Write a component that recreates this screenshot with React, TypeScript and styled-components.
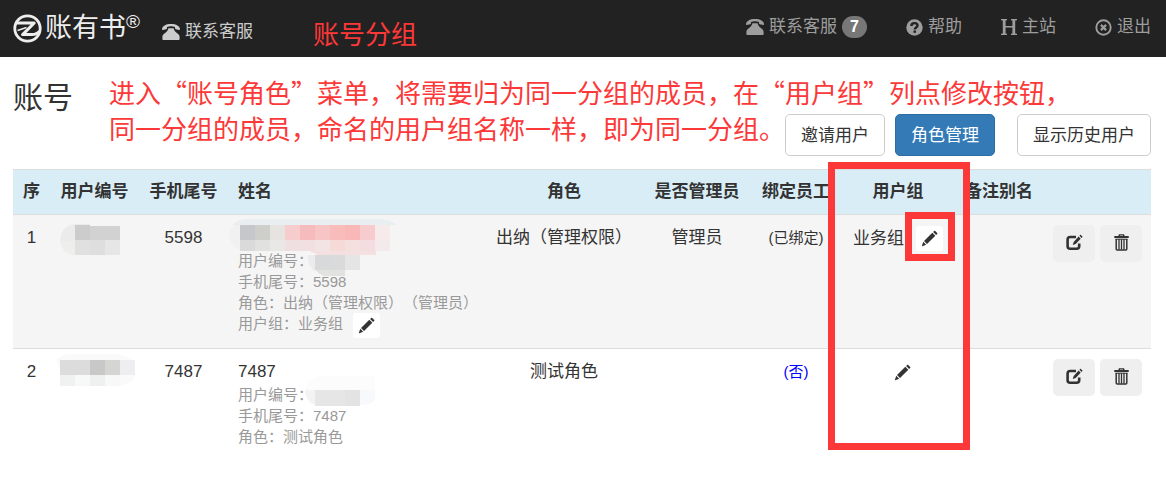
import React from "react";
import styled, { createGlobalStyle, css } from "styled-components";

const RED = "#fc3838";

const GlobalStyle = createGlobalStyle`
  *, *::before, *::after { box-sizing: border-box; }
  body {
    margin: 0;
    background: #fff;
    color: #333;
    font-family: "Liberation Sans", "Noto Sans CJK SC", sans-serif;
    font-size: 17px;
    line-height: 24px;
  }
  button { font-family: inherit; font-size: inherit; cursor: pointer; }
`;

const Page = styled.div`
  position: relative;
`;

const Header = styled.header`
  display: flex;
  align-items: flex-start;
  height: 57px;
  padding: 0 15px 0 13px;
  background: #222;
`;

const Brand = styled.a`
  display: flex;
  align-items: center;
  height: 57px;
  color: #eee;
  text-decoration: none;
`;

const BrandName = styled.span`
  margin-left: 3px;
  font-size: 27px;
  line-height: 57px;
`;

const Registered = styled.sup`
  align-self: flex-start;
  margin-top: 12px;
  font-size: 19px;
  line-height: 19px;
  vertical-align: baseline;
`;

const NavLink = styled.a<{ $bright?: boolean }>`
  display: flex;
  align-items: center;
  gap: 5px;
  height: 54px;
  color: ${(p) => (p.$bright ? "#ccc" : "#9d9d9d")};
  text-decoration: none;
  white-space: nowrap;
`;

const Contact = styled.div`
  padding: 5px 0 0 22px;
`;

const Note = styled.p`
  margin: 0;
  color: ${RED};
  font-family: "Noto Sans CJK SC", sans-serif;
  font-size: 26px;
  line-height: 36px;
  white-space: nowrap;
`;

const HeaderNote = styled(Note)`
  padding: 15px 0 0 60px;
`;

const PageNote = styled(Note)`
  position: absolute;
  top: 74px;
  left: 109px;
  pointer-events: none;
`;

const Nav = styled.nav`
  display: flex;
  gap: 39px;
  margin-left: auto;
`;

const Badge = styled.span`
  min-width: 25px;
  border-radius: 11px;
  background: #777;
  color: #fff;
  font-size: 16px;
  font-weight: 700;
  line-height: 22px;
  text-align: center;
`;

const Main = styled.main`
  padding: 0 15px 0 13px;
`;

const TitleBar = styled.div`
  display: flex;
  align-items: flex-end;
  height: 99px;
  margin-bottom: 13px;
`;

const Title = styled.h1`
  flex: 1;
  margin: 0;
  align-self: flex-start;
  padding-top: 23px;
  font-size: 30px;
  font-weight: 400;
  line-height: 36px;
`;

const Actions = styled.div`
  display: flex;
  gap: 10px;
`;

const Button = styled.button<{ $primary?: boolean; $apart?: boolean }>`
  height: 42px;
  padding: 2px 15px 0;
  border: 1px solid #ccc;
  border-radius: 5px;
  background: #fff;
  color: #333;
  line-height: 24px;
  ${(p) => p.$apart && css`margin-left: 12px;`}
  ${(p) =>
    p.$primary &&
    css`
      border-color: #2e6da4;
      background: #337ab7;
      color: #fff;
    `}
`;

const Table = styled.table`
  width: 100%;
  border-collapse: collapse;
  table-layout: fixed;
`;

const Col = styled.col<{ $w?: number }>`
  width: ${(p) => (p.$w ? `${p.$w}px` : "auto")};
`;

const Th = styled.th<{ $left?: boolean }>`
  position: relative;
  padding: 10px;
  border-top: 1px solid #ddd;
  background: #d9edf7;
  font-weight: 700;
  text-align: ${(p) => (p.$left ? "left" : "center")};
  white-space: nowrap;
`;

const Row = styled.tr<{ $striped?: boolean }>`
  background: ${(p) => (p.$striped ? "#f5f5f5" : "#fff")};
`;

const Td = styled.td<{ $left?: boolean }>`
  position: relative;
  padding: 10px;
  border-top: 1px solid #ddd;
  line-height: 26px;
  text-align: ${(p) => (p.$left ? "left" : "center")};
  vertical-align: top;
  white-space: nowrap;
`;

const Primary = styled.div`
  height: 25px;
`;

const Detail = styled.div`
  color: #999;
  font-size: 15px;
  line-height: 21px;
  text-spacing-trim: space-all;
`;

const GroupLine = styled.div`
  display: flex;
  align-items: center;
  justify-content: center;
  gap: 4px;
  height: 27px;
`;

const DetailGroupLine = styled(GroupLine)`
  align-items: flex-start;
  justify-content: flex-start;
  gap: 2px;
  height: 25px;
`;

const Bound = styled.span`
  font-size: 15px;
`;

const BoundLink = styled.a`
  color: #00f;
  font-size: 15px;
  text-decoration: none;
`;

const MiniButton = styled.button`
  position: relative;
  display: flex;
  align-items: center;
  justify-content: center;
  width: 27px;
  height: 25px;
  margin: 0 0 0 8px;
  padding: 0;
  border: 0;
  border-radius: 3px;
  background: #fff;
  color: #333;
`;

const ButtonPair = styled.div`
  display: flex;
  gap: 5px;
`;

const SquareButton = styled.button`
  display: flex;
  flex: none;
  align-items: center;
  justify-content: center;
  width: 42px;
  height: 37px;
  padding: 0 0 3px;
  border: 0;
  border-radius: 5px;
  background: #efefef;
  color: #333;
`;

const ColumnMark = styled.span`
  position: absolute;
  z-index: 2;
  top: -8px;
  left: -13px;
  right: -15px;
  height: 288px;
  border: 7px solid ${RED};
  pointer-events: none;
`;

const ButtonMark = styled.span`
  position: absolute;
  z-index: 2;
  inset: -14px -12px -10px -11px;
  border: 7px solid ${RED};
  pointer-events: none;
`;

const MaskSvg = styled.svg`
  position: absolute;
  top: 0;
  left: 0;
  pointer-events: none;
`;

/* ---------- icons ---------- */

const PhoneIcon = () => (
  <svg width="18" height="16" viewBox="0 0 18 16" fill="currentColor" aria-hidden="true">
    <path d="M0 5.200C.2 3.400 1 2.200 2.600 1.400 4.200.4 6.400 0 9 0s4.800.4 6.400 1.400C17 2.200 17.800 3.400 18 5.200c0 .6-.3.800-.8.700l-3.400-.7c-.5-.1-.8-.4-.8-.9V2.900C11.800 2.500 10.400 2.300 9 2.300s-2.800.2-4 .6v1.400c0 .5-.3.800-.8.900l-3.400.7C.3 6 0 5.800 0 5.200z" />
    <path d="M6.400 4.300h5.200c.3 1.900 1.400 3.400 3.300 4.800 2 1.400 2.700 2.400 2.700 3.900v2.200c0 .5-.3.800-.8.800H1.200c-.5 0-.8-.3-.8-.8V13c0-1.500.7-2.500 2.700-3.900 1.900-1.400 3-2.900 3.300-4.800z" />
  </svg>
);

const HelpIcon = () => (
  <svg width="17" height="17" viewBox="0 0 17 17" fill="none" aria-hidden="true">
    <circle cx="8.500" cy="8.500" r="8.200" fill="currentColor" />
    <path d="M5.400 6.900C5.400 4.900 6.700 4.100 8.500 4.100s3 .9 3 2.400c0 2-2.700 1.900-2.700 4" stroke="#222" strokeWidth="2.400" />
    <path d="M7.500 11.500h2.500v2.300H7.500z" fill="#222" />
  </svg>
);

const HomeIcon = () => (
  <svg width="16" height="16" viewBox="0 0 16 16" fill="currentColor" aria-hidden="true">
    <path d="M0 0h6v1.200L4.600 1.500V7h6.800V1.500L10 1.200V0h6v1.200l-1.800.4v12.800l1.800.4V16h-6v-1.200l1.400-.3V8.600H4.600v5.900l1.400.3V16H0v-1.200l1.800-.4V1.600L0 1.200z" />
  </svg>
);

const ExitIcon = () => (
  <svg width="17" height="17" viewBox="0 0 17 17" fill="none" stroke="currentColor" aria-hidden="true">
    <circle cx="8.500" cy="8.500" r="7.200" strokeWidth="1.900" />
    <path d="M5.900 5.900l5.200 5.200M11.100 5.900l-5.200 5.200" strokeWidth="2.200" />
  </svg>
);

const PencilIcon = () => (
  <svg width="17" height="17" viewBox="0 0 17 17" fill="currentColor" aria-hidden="true">
    <path d="M13.200.9c.3-.3.700-.3 1 0l2 2c.3.300.3.700 0 1l-1.100 1.100-3-3zM11.300 2.800l3 3-8.300 8.200-3-3zM2.200 11.800l3 3-3.900 1.500c-.3.100-.5-.1-.4-.4z" />
  </svg>
);

const EditIcon = () => (
  <svg width="17" height="17" viewBox="0 0 17 17" aria-hidden="true">
    <path d="M10 3H4.200C2.700 3 1.600 4 1.600 5.500v6.700c0 1.500 1.100 2.500 2.600 2.500h6.400c1.500 0 2.600-1 2.600-2.500V9.600" fill="none" stroke="currentColor" strokeWidth="2.600" />
    <path d="M12.600 2.600l2.100 2.100-5 5.300-3 1.100 1-3.200zM13.400 1.800l.8-.8c.2-.2.500-.2.700 0l1.500 1.400c.2.200.2.500 0 .7l-.8.900z" fill="currentColor" />
  </svg>
);

const TrashIcon = () => (
  <svg width="15" height="17" viewBox="0 0 15 17" aria-hidden="true">
    <path d="M.3 4V2h4.200V1.300c0-.7.400-1.100 1.100-1.100h3.800c.7 0 1.100.4 1.100 1.100V2h4.200v2zM6 2h3v-.6H6z" fill="currentColor" fillRule="evenodd" />
    <path d="M2.200 5v10q0 1 1 1h8.600q1 0 1-1V5" fill="none" stroke="currentColor" strokeWidth="1.500" />
    <path d="M5 5v10.500M7.500 5v10.500M10 5v10.500" stroke="currentColor" strokeWidth="1.300" />
    <path d="M1.500 5.200h12" stroke="currentColor" />
  </svg>
);

const LogoMark = () => (
  <svg width="29" height="29" viewBox="0 0 29 29" fill="none" stroke="currentColor" aria-hidden="true">
    <circle cx="14.500" cy="14.500" r="12.700" strokeWidth="2.800" />
    <path d="M3 9h18.200L9.600 20.600h9.400c3.200 0 5.700-1 7.500-3.400" strokeWidth="3" strokeLinejoin="round" />
    <path d="M4.500 16.500L13.500 13.500" strokeWidth="1.600" />
  </svg>
);

/* ---------- blurred-out values ---------- */

/* x, y, width, height, fill */
type Tile = [number, number, number, number, string];

const tileRow = (x: number, y: number, h: number, fills: string[]): Tile[] =>
  fills.map((fill, i) => [x + i * 15, y, 15, h, fill]);

interface MaskProps {
  width: number;
  height: number;
  blobs: { d: string; fill: string }[];
  tiles: Tile[];
}

const Mask = ({ width, height, blobs, tiles }: MaskProps) => (
  <MaskSvg width={width} height={height} viewBox={`0 0 ${width} ${height}`} shapeRendering="crispEdges" aria-hidden="true">
    {blobs.map((b) => (
      <path key={b.d} d={b.d} fill={b.fill} />
    ))}
    {tiles.map(([x, y, w, h, fill]) => (
      <rect key={`${x}-${y}`} x={x} y={y} width={w} height={h} fill={fill} />
    ))}
  </MaskSvg>
);

const idMaskOne: MaskProps = {
  width: 89,
  height: 60,
  blobs: [
    { d: "M25 9h15v17H10C10 16 17 9 25 9z", fill: "#ebebeb" },
    { d: "M10 26h15v14C17 40 10 34 10 26z", fill: "#eeeeec" },
  ],
  tiles: [
    [25, 10, 15, 15, "#ccc"],
    [40, 11, 30, 14, "#d2d2d2"],
    ...tileRow(25, 25, 15, ["#e0e0e0", "#dedede", "#e6e6e6"]),
  ],
};

const idMaskTwo: MaskProps = {
  width: 89,
  height: 60,
  blobs: [
    { d: "M6 11C10 7 15 5 20 5h45c9 0 20 5 20 15H10z", fill: "#fafafa" },
    { d: "M70 26h15c0 7-8 10-15 10z", fill: "#fafafa" },
  ],
  tiles: [
    ...tileRow(10, 11, 15, ["#dcdcdc", "#dcdcdc", "#c8c8c8", "#d5d5d4", "#eeeef0"]),
    ...tileRow(10, 26, 11, ["#f0f1f1", "#f8f8f8", "#eef1f0", "#f8f8f8"]),
  ],
};

const nameMaskOne: MaskProps = {
  width: 257,
  height: 70,
  blobs: [
    { d: "M4 10C8 6 13 4 20 4h130c8 0 14 2 19 6z", fill: "#e9eef0" },
    { d: "M5 10h7v25C4 32 0 24 1 17z", fill: "#f1f1f1" },
    { d: "M80 35h68v5H90z", fill: "#f4dfe1" },
    { d: "M80 40h7v17C81 52 79 46 80 40z", fill: "#ececec" },
    { d: "M87 55h30v6H98C93 61 90 58 87 55z", fill: "#e2e2e1" },
  ],
  tiles: [
    ...tileRow(12, 10, 15, ["#c6c7ca", "#cececb", "#e7e3e1", "#f6cccd", "#f6bcbd", "#f7c5c6", "#f8bdbb", "#f9b7b8", "#f6ccce", "#f6eaea"]),
    ...tileRow(12, 25, 11, ["#dadadb", "#e1e1e0", "#eae8e7", "#f0dfe0", "#f2dfe1", "#f2e4e4", "#f6dad7", "#f6dfdf", "#f3dde0", "#f3eaeb"]),
    ...tileRow(87, 40, 15, ["#d8d9da", "#dadada", "#e5e5e6"]),
  ],
};

const nameMaskTwo: MaskProps = {
  width: 257,
  height: 70,
  blobs: [
    { d: "M77 41C78 32 86 27 95 27h52v14z", fill: "#fcfcfc" },
    { d: "M77 41h10v15C80 54 77 47 77 41z", fill: "#f3f3f3" },
    { d: "M132 41h15v10c-3 4-8 5-15 5z", fill: "#f7f9fc" },
  ],
  tiles: tileRow(87, 41, 16, ["#e6e6e6", "#e6e6e7", "#e3e3e4"]),
};

/* ---------- data ---------- */

interface Account {
  index: number;
  phone: string;
  name?: string;
  role: string;
  roleDetail: string;
  admin?: string;
  bound: boolean;
  group?: string;
  idMask: MaskProps;
  nameMask: MaskProps;
}

const accounts: Account[] = [
  {
    index: 1,
    phone: "5598",
    role: "出纳（管理权限）",
    roleDetail: "出纳（管理权限）（管理员）",
    admin: "管理员",
    bound: true,
    group: "业务组",
    idMask: idMaskOne,
    nameMask: nameMaskOne,
  },
  {
    index: 2,
    phone: "7487",
    name: "7487",
    role: "测试角色",
    roleDetail: "测试角色",
    bound: false,
    idMask: idMaskTwo,
    nameMask: nameMaskTwo,
  },
];

const columnWidths = [37, 89, 89, undefined, 158, 108, 90, 114, 88, 108];

const AccountRow = ({ account: a }: { account: Account }) => (
  <Row $striped={a.index % 2 === 1}>
    <Td>{a.index}</Td>
    <Td>
      <Mask {...a.idMask} />
    </Td>
    <Td>{a.phone}</Td>
    <Td $left>
      <Primary>{a.name}</Primary>
      <Detail>用户编号：</Detail>
      <Detail>手机尾号：{a.phone}</Detail>
      <Detail>角色：{a.roleDetail}</Detail>
      {a.group && (
        <Detail>
          <DetailGroupLine>
            用户组：{a.group}
            <MiniButton type="button" aria-label="修改用户组">
              <PencilIcon />
            </MiniButton>
          </DetailGroupLine>
        </Detail>
      )}
      <Mask {...a.nameMask} />
    </Td>
    <Td>{a.role}</Td>
    <Td>{a.admin}</Td>
    <Td>{a.bound ? <Bound>(已绑定)</Bound> : <BoundLink href="#bind">(否)</BoundLink>}</Td>
    <Td>
      <GroupLine>
        {a.group}
        <MiniButton type="button" aria-label="修改用户组">
          <PencilIcon />
          {a.group && <ButtonMark />}
        </MiniButton>
      </GroupLine>
    </Td>
    <Td />
    <Td>
      <ButtonPair>
        <SquareButton type="button" aria-label="编辑">
          <EditIcon />
        </SquareButton>
        <SquareButton type="button" aria-label="删除">
          <TrashIcon />
        </SquareButton>
      </ButtonPair>
    </Td>
  </Row>
);

export default function App() {
  return (
    <Page lang="zh-CN">
      <GlobalStyle />
      <Header>
        <Brand href="#home">
          <LogoMark />
          <BrandName>账有书</BrandName>
          <Registered>®</Registered>
        </Brand>
        <Contact>
          <NavLink href="#contact" $bright>
            <PhoneIcon />
            联系客服
          </NavLink>
        </Contact>
        <HeaderNote>账号分组</HeaderNote>
        <Nav>
          <NavLink href="#service">
            <PhoneIcon />
            联系客服
            <Badge>7</Badge>
          </NavLink>
          <NavLink href="#help">
            <HelpIcon />
            帮助
          </NavLink>
          <NavLink href="#main">
            <HomeIcon />
            主站
          </NavLink>
          <NavLink href="#logout">
            <ExitIcon />
            退出
          </NavLink>
        </Nav>
      </Header>
      <Main>
        <TitleBar>
          <Title>账号</Title>
          <Actions>
            <Button type="button">邀请用户</Button>
            <Button type="button" $primary>
              角色管理
            </Button>
            <Button type="button" $apart>
              显示历史用户
            </Button>
          </Actions>
        </TitleBar>
        <Table>
          <colgroup>
            {columnWidths.map((w, i) => (
              <Col key={i} $w={w} />
            ))}
          </colgroup>
          <thead>
            <tr>
              <Th>序</Th>
              <Th>用户编号</Th>
              <Th>手机尾号</Th>
              <Th $left>姓名</Th>
              <Th>角色</Th>
              <Th>是否管理员</Th>
              <Th>绑定员工</Th>
              <Th>
                用户组
                <ColumnMark />
              </Th>
              <Th>备注别名</Th>
              <Th aria-label="操作" />
            </tr>
          </thead>
          <tbody>
            {accounts.map((a) => (
              <AccountRow key={a.index} account={a} />
            ))}
          </tbody>
        </Table>
      </Main>
      <PageNote>
        进入“账号角色”菜单，将需要归为同一分组的成员，在“用户组”列点修改按钮，
        <br />
        同一分组的成员，命名的用户组名称一样，即为同一分组。
      </PageNote>
    </Page>
  );
}
